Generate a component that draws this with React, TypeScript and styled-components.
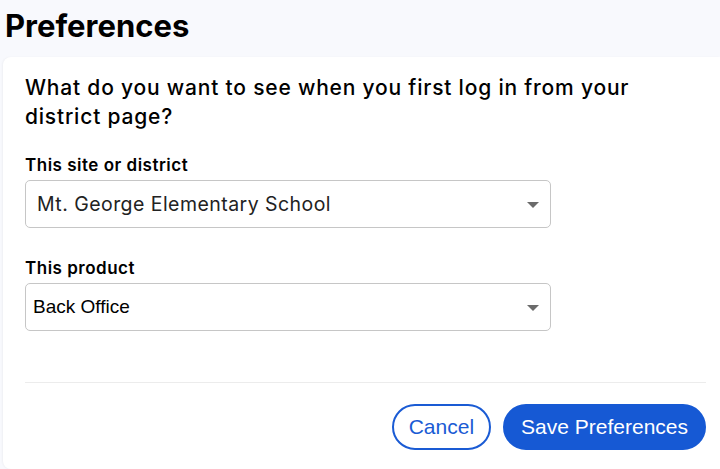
import React, { useState } from "react";
import styled, { createGlobalStyle } from "styled-components";

const GlobalStyle = createGlobalStyle`
    html, body {
        margin: 0;
        padding: 0;
        background: #f8f9fd;
        font-family: "Inter", "Noto Sans", sans-serif;
        color: #000;
        overflow: hidden;
    }
`;

const Page = styled.div`
    width: 720px;
    height: 469px;
    display: flex;
    flex-direction: column;
    box-sizing: border-box;
    padding: 0 0 0 3px;
`;

const Title = styled.h1`
    margin: 0;
    padding: 6px 0 0 2px;
    height: 57px;
    box-sizing: border-box;
    font-size: 31px;
    font-weight: 700;
    letter-spacing: 0;
    line-height: 40px;
`;

const Card = styled.section`
    flex: 1;
    background: #fff;
    border-radius: 8px 0 0 8px;
    padding: 16px 15px 0 22px;
    display: flex;
    flex-direction: column;
    box-shadow: -1px 0 2px rgba(0, 0, 0, 0.04);
`;

const Question = styled.h2`
    margin: 0 0 24px;
    font-size: 21px;
    font-weight: 500;
    letter-spacing: 0.8px;
    line-height: 29px;
    max-width: 610px;
`;

const Field = styled.div`
    display: flex;
    flex-direction: column;
    margin-bottom: ${(p: { gap: number }) => p.gap}px;
`;

const Label = styled.label`
    font-size: 17px;
    font-weight: 600;
    letter-spacing: 0.5px;
    line-height: 20px;
    margin-bottom: 5px;
`;

const SelectBox = styled.div`
    position: relative;
    width: 526px;
    height: 48px;
    box-sizing: border-box;
    border: 1px solid #c6c6c6;
    border-radius: 5px;
    display: flex;
    align-items: center;
    padding-left: ${(p: { arial: boolean }) => (p.arial ? 7 : 11)}px;
    font-family: ${(p: { arial: boolean }) =>
        p.arial ? '"Liberation Sans", Arial, sans-serif' : '"Inter", sans-serif'};
    font-size: ${(p: { arial: boolean }) => (p.arial ? 19 : 19.5)}px;
    letter-spacing: ${(p: { arial: boolean }) => (p.arial ? 0 : 0.45)}px;
    color: ${(p: { arial: boolean }) => (p.arial ? "#000" : "#222")};
    cursor: pointer;
`;

const Caret = styled.span`
    position: absolute;
    right: 11px;
    top: 50%;
    margin-top: -2px;
    width: 0;
    height: 0;
    border-left: 6px solid transparent;
    border-right: 6px solid transparent;
    border-top: 6px solid #6b6b6b;
`;

const Divider = styled.hr`
    margin: 0;
    border: 0;
    border-top: 1px solid #ececec;
    width: 681px;
`;

const Actions = styled.div`
    display: flex;
    justify-content: flex-end;
    gap: 12px;
    width: 681px;
    padding-top: 21px;
`;

const Button = styled.button`
    height: 46px;
    box-sizing: border-box;
    border-radius: 23px;
    border: 2px solid #1a5bd4;
    padding: 0 ${(p: { primary?: boolean }) => (p.primary ? 16 : 15)}px;
    font-family: "Liberation Sans", Arial, sans-serif;
    font-size: 21px;
    background: ${(p: { primary?: boolean }) => (p.primary ? "#1659d4" : "#fff")};
    color: ${(p: { primary?: boolean }) => (p.primary ? "#fff" : "#1a5bd4")};
    border-color: ${(p: { primary?: boolean }) => (p.primary ? "#1659d4" : "#1a5bd4")};
    cursor: pointer;
`;

const App = () => {
    const [site] = useState("Mt. George Elementary School");
    const [product] = useState("Back Office");

    return (
        <>
            <GlobalStyle />
            <Page>
                <Title>Preferences</Title>
                <Card>
                    <Question>
                        What do you want to see when you first log in from your district page?
                    </Question>
                    <Field gap={30}>
                        <Label>This site or district</Label>
                        <SelectBox arial={false}>
                            {site}
                            <Caret />
                        </SelectBox>
                    </Field>
                    <Field gap={51}>
                        <Label>This product</Label>
                        <SelectBox arial>
                            {product}
                            <Caret />
                        </SelectBox>
                    </Field>
                    <Divider />
                    <Actions>
                        <Button>Cancel</Button>
                        <Button primary>Save Preferences</Button>
                    </Actions>
                </Card>
            </Page>
        </>
    );
};

export default App;
